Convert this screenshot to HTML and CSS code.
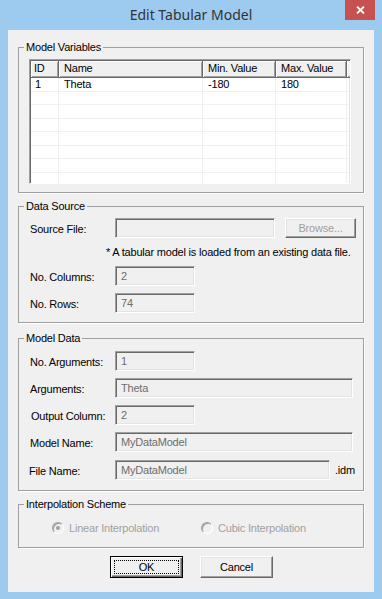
FILE: index.html
```html
<!DOCTYPE html>
<html>
<head>
<meta charset="utf-8">
<title>Edit Tabular Model</title>
<link rel="stylesheet" href="styles.css">
</head>
<body>
<div class="window">
  <div class="titlebar">
    <span></span>
    <div class="title">Edit Tabular Model</div>
    <div class="close"><svg width="9" height="8" viewBox="0 0 9 8"><path d="M1 0.5L8 7.5M8 0.5L1 7.5" stroke="#fff" stroke-width="1.8"/></svg></div>
  </div>
  <div class="client">
    <fieldset class="group g1">
      <legend>Model Variables</legend>
      <div class="list">
        <div class="lhead">
          <div class="th th-id">ID</div><div class="th">Name</div><div class="th">Min. Value</div><div class="th">Max. Value</div><div class="th filler"></div>
        </div>
        <div class="row"><div class="td td-id">1</div><div class="td">Theta</div><div class="td">-180</div><div class="td">180</div><div class="td last"></div></div>
        <div class="row"><div class="td td-id"></div><div class="td"></div><div class="td"></div><div class="td"></div><div class="td last"></div></div>
        <div class="row"><div class="td td-id"></div><div class="td"></div><div class="td"></div><div class="td"></div><div class="td last"></div></div>
        <div class="row"><div class="td td-id"></div><div class="td"></div><div class="td"></div><div class="td"></div><div class="td last"></div></div>
        <div class="row"><div class="td td-id"></div><div class="td"></div><div class="td"></div><div class="td"></div><div class="td last"></div></div>
        <div class="row"><div class="td td-id"></div><div class="td"></div><div class="td"></div><div class="td"></div><div class="td last"></div></div>
        <div class="row"><div class="td td-id"></div><div class="td"></div><div class="td"></div><div class="td"></div><div class="td last"></div></div>
        <div class="row"><div class="td td-id"></div><div class="td"></div><div class="td"></div><div class="td"></div><div class="td last"></div></div>
      </div>
    </fieldset>

    <fieldset class="group g2">
      <legend>Data Source</legend>
      <div class="frow">
        <span class="lbl">Source File:</span>
        <div class="edit w160"></div>
        <div class="btn disabled browse">Browse...</div>
      </div>
      <div class="note">* A tabular model is loaded from an existing data file.</div>
      <div class="frow gap7">
        <span class="lbl">No. Columns:</span>
        <div class="edit w80">2</div>
      </div>
      <div class="frow gap7">
        <span class="lbl">No. Rows:</span>
        <div class="edit w80">74</div>
      </div>
    </fieldset>

    <fieldset class="group g3">
      <legend>Model Data</legend>
      <div class="frow">
        <span class="lbl">No. Arguments:</span>
        <div class="edit w80">1</div>
      </div>
      <div class="frow gap7">
        <span class="lbl">Arguments:</span>
        <div class="edit w238">Theta</div>
      </div>
      <div class="frow gap7">
        <span class="lbl lbl-shift">Output Column:</span>
        <div class="edit w80">2</div>
      </div>
      <div class="frow gap7">
        <span class="lbl">Model Name:</span>
        <div class="edit w238">MyDataModel</div>
      </div>
      <div class="frow gap8">
        <span class="lbl lbl-back">File Name:</span>
        <div class="edit w215">MyDataModel</div>
        <span class="ext">.idm</span>
      </div>
    </fieldset>

    <fieldset class="group g4">
      <legend>Interpolation Scheme</legend>
      <div class="radios">
        <div class="radio first"><span class="rb checked"></span><span class="rtext">Linear Interpolation</span></div>
        <div class="radio"><span class="rb"></span><span class="rtext">Cubic Interpolation</span></div>
      </div>
    </fieldset>

    <div class="buttons">
      <div class="btn default"><span class="focus">OK</span></div>
      <div class="btn">Cancel</div>
    </div>
  </div>
</div>
</body>
</html>
```

FILE: styles.css
```css
html, body {
  margin: 0;
  padding: 0;
}
body {
  width: 382px;
  height: 599px;
  overflow: hidden;
  background: #9dcbef;
  font: 11px "Liberation Sans", Arial, sans-serif;
  letter-spacing: -0.2px;
  color: #000;
}
.window {
  display: flex;
  flex-direction: column;
  height: 599px;
}
.titlebar {
  height: 30px;
  display: grid;
  grid-template-columns: 1fr auto 1fr;
  flex: none;
}
.title {
  font: 14px "Noto Sans", "Open Sans", sans-serif;
  letter-spacing: 0;
  color: #333;
  line-height: 30px;
  white-space: nowrap;
}
.close {
  justify-self: end;
  align-self: start;
  width: 30px;
  height: 20px;
  margin-right: 7px;
  background: #c75050;
  display: flex;
  align-items: center;
  justify-content: center;
}
.client {
  margin: 0 8px;
  height: 562px;
  box-sizing: border-box;
  background: #f0f0f0;
  padding: 11px 10px 0 10px;
  display: flex;
  flex-direction: column;
  flex: none;
}
.group {
  margin: 0;
  border: 1px solid #a0a0a0;
  box-shadow: 1px 1px 0 #fff;
  padding: 5px 10px 8px 11px;
  min-width: 0;
}
.group legend {
  margin-left: -6px;
  padding: 0 2px;
  line-height: 13px;
  height: 13px;
}
.g2 { margin-top: 7px; padding-bottom: 9px; }
.g3 { margin-top: 9px; padding-top: 6px; padding-bottom: 10px; }
.g4 { margin-top: 7px; padding-top: 10px; padding-bottom: 13px; }

/* list view */
.list {
  height: 125px;
  box-sizing: border-box;
  margin-left: -1px;
  width: 322px;
  border: 1px solid;
  border-color: #a0a0a0 #fff #fff #a0a0a0;
  box-shadow: inset 1px 1px 0 #696969, inset -1px -1px 0 #e3e3e3;
  padding: 1px;
  background-clip: content-box;
  overflow: hidden;
}
.list > div {
  background: #fff;
}
.lhead, .row {
  display: grid;
  grid-template-columns: 28px 144px 73px 71px 1fr;
}
.lhead { height: 17px; }
.th {
  box-sizing: border-box;
  background: #f0f0f0;
  border-right: 1px solid #696969;
  border-bottom: 1px solid #696969;
  box-shadow: inset 1px 1px 0 #fff, inset -1px -1px 0 #a0a0a0;
  padding-left: 5px;
  line-height: 15px;
  white-space: nowrap;
}
.th-id { padding-left: 3px; }
.th.filler { border-right: none; }
.row {
  height: 13.5px;
  box-sizing: border-box;
  border-bottom: 1px solid #f0f0f0;
}
.td {
  border-right: 1px solid #f0f0f0;
  padding-left: 5px;
  line-height: 13px;
  white-space: nowrap;
}
.td-id { padding-left: 4px; }
.td.last { border-right: none; }

/* form rows */
.frow {
  display: flex;
  align-items: center;
  height: 20px;
}
.gap7 { margin-top: 7px; }
.gap8 { margin-top: 8px; }
.lbl {
  width: 85px;
  flex: none;
  padding-top: 2px;
}
.lbl-shift { padding-left: 1px; width: 84px; }
.lbl-back { margin-left: -1px; width: 86px; }
.edit {
  height: 20px;
  box-sizing: border-box;
  border: 1px solid;
  border-color: #a0a0a0 #fff #fff #a0a0a0;
  box-shadow: inset 1px 1px 0 #696969, inset -1px -1px 0 #e3e3e3;
  background: #f0f0f0;
  color: #6d6d6d;
  padding-left: 5px;
  line-height: 18px;
  flex: none;
}
.w80 { width: 80px; }
.w160 { width: 160px; }
.w215 { width: 215px; }
.w238 { width: 238px; }
.ext { margin-left: 5px; }
.note {
  margin-top: 7px;
  margin-left: 76px;
  height: 14px;
  line-height: 14px;
  white-space: nowrap;
}

/* buttons */
.btn {
  box-sizing: border-box;
  height: 22px;
  width: 73px;
  border: 1px solid;
  border-color: #fff #696969 #696969 #fff;
  box-shadow: inset -1px -1px 0 #a0a0a0, inset 1px 1px 0 #e3e3e3;
  background: #f0f0f0;
  display: flex;
  align-items: center;
  justify-content: center;
  flex: none;
}
.btn.browse {
  width: 71px;
  height: 20px;
  margin-left: 10px;
}
.btn.disabled { color: #a0a0a0; }
.btn.default {
  border: 1px solid #000;
  box-shadow: inset 1px 1px 0 #fff, inset -1px -1px 0 #696969, inset -2px -2px 0 #a0a0a0;
  padding: 3px;
}
.btn.default .focus {
  flex: 1;
  align-self: stretch;
  border: 1px dotted #000;
  display: flex;
  align-items: center;
  justify-content: center;
}
.buttons {
  margin-top: 8px;
  display: flex;
  justify-content: center;
  gap: 17px;
  padding-left: 1px;
}

/* radios */
.radios {
  display: flex;
  align-items: center;
  height: 13px;
  padding-left: 22px;
}
.radio {
  display: flex;
  align-items: center;
  color: #a0a0a0;
}
.radio.first { width: 149px; }
.rb {
  width: 12px;
  height: 12px;
  box-sizing: border-box;
  border-radius: 50%;
  border: 1px solid;
  border-color: #a0a0a0 #fff #fff #a0a0a0;
  box-shadow: inset 1px 1px 0 #a0a0a0;
  background: #f0f0f0;
  display: flex;
  align-items: center;
  justify-content: center;
  margin-right: 5px;
}
.rb.checked::before {
  content: "";
  width: 4px;
  height: 4px;
  border-radius: 50%;
  background: #a0a0a0;
}
```
